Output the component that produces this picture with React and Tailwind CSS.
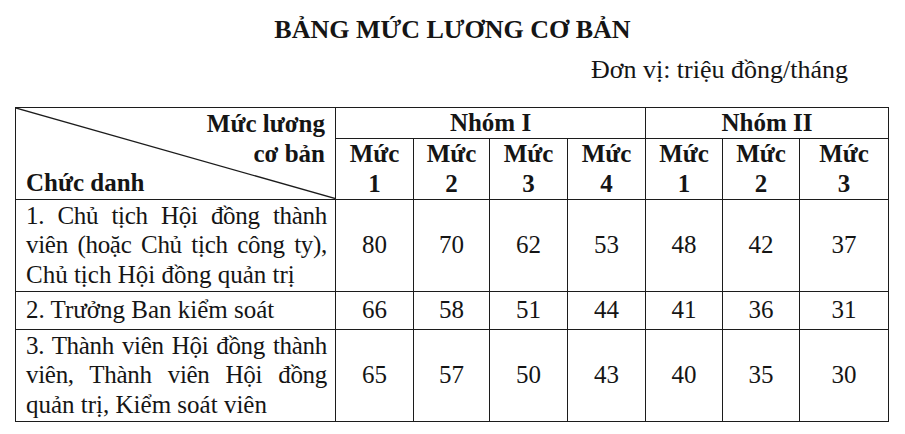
import React from "react";

const groupOne = ["1", "2", "3", "4"];
const groupTwo = ["1", "2", "3"];

const rows = [
  {
    id: 1,
    lines: [
      "1. Chủ tịch Hội đồng thành",
      "viên (hoặc Chủ tịch công ty),",
      "Chủ tịch Hội đồng quản trị",
    ],
    values: [80, 70, 62, 53, 48, 42, 37],
    height: "h-[92px]",
  },
  {
    id: 2,
    lines: ["2. Trưởng Ban kiểm soát"],
    values: [66, 58, 51, 44, 41, 36, 31],
    height: "h-[38px]",
  },
  {
    id: 3,
    lines: [
      "3. Thành viên Hội đồng thành",
      "viên, Thành viên Hội đồng",
      "quản trị, Kiểm soát viên",
    ],
    values: [65, 57, 50, 43, 40, 35, 30],
    height: "h-[92px]",
  },
];

const cell = "border-[1.5px] border-[#1c1c1c] p-0 align-middle";

const App = () => {
  return (
    <div className="w-[905px] h-[434px] bg-white text-[#151515] overflow-hidden font-['Liberation_Serif','Times_New_Roman',serif]">
      {/* title */}
      <h1 className="pt-[14px] text-center text-[26px] leading-[32px] font-bold">
        BẢNG MỨC LƯƠNG CƠ BẢN
      </h1>
      <p className="mt-[8px] pr-[57px] text-right text-[26px] leading-[32px]">
        Đơn vị: triệu đồng/tháng
      </p>

      {/* salary table */}
      <table className="ml-[15px] mt-[21px] w-[873px] table-fixed border-collapse text-[25px] leading-[29.5px] font-['Liberation_Serif','Times_New_Roman',serif]">
        <colgroup>
          <col className="w-[320px]" />
          <col className="w-[78px]" />
          <col className="w-[76px]" />
          <col className="w-[78px]" />
          <col className="w-[78px]" />
          <col className="w-[77px]" />
          <col className="w-[77px]" />
          <col className="w-[89px]" />
        </colgroup>
        <thead className="font-bold">
          <tr className="h-[30px]">
            <th rowSpan={2} className={`${cell} relative font-bold`}>
              <svg
                className="absolute inset-0 w-full h-full"
                viewBox="0 0 100 100"
                preserveAspectRatio="none"
              >
                <line
                  x1="0"
                  y1="0"
                  x2="100"
                  y2="100"
                  stroke="#1c1c1c"
                  strokeWidth="1.3"
                  vectorEffect="non-scaling-stroke"
                />
              </svg>
              <div className="relative flex flex-col px-[10px]">
                <span className="text-right">Mức lương</span>
                <span className="text-right">cơ bản</span>
                <span className="text-left">Chức danh</span>
              </div>
            </th>
            <th colSpan={4} className={`${cell} text-center font-bold`}>
              Nhóm I
            </th>
            <th colSpan={3} className={`${cell} text-center font-bold`}>
              Nhóm II
            </th>
          </tr>
          <tr className="h-[61px]">
            {[...groupOne, ...groupTwo].map((n, i) => (
              <th key={i} className={`${cell} text-center font-bold`}>
                <div>Mức</div>
                <div>{n}</div>
              </th>
            ))}
          </tr>
        </thead>
        <tbody>
          {rows.map((row) => (
            <tr key={row.id} className={row.height}>
              <td className={`${cell} pl-[10px] pr-[8px]`}>
                {row.lines.map((line, i) => (
                  <div
                    key={i}
                    className={
                      i < row.lines.length - 1
                        ? "whitespace-nowrap tracking-[-0.3px] text-justify [text-align-last:justify]"
                        : "whitespace-nowrap text-left"
                    }
                  >
                    {line}
                  </div>
                ))}
              </td>
              {row.values.map((v, i) => (
                <td key={i} className={`${cell} text-center`}>
                  {v}
                </td>
              ))}
            </tr>
          ))}
        </tbody>
      </table>
    </div>
  );
};

export default App;
